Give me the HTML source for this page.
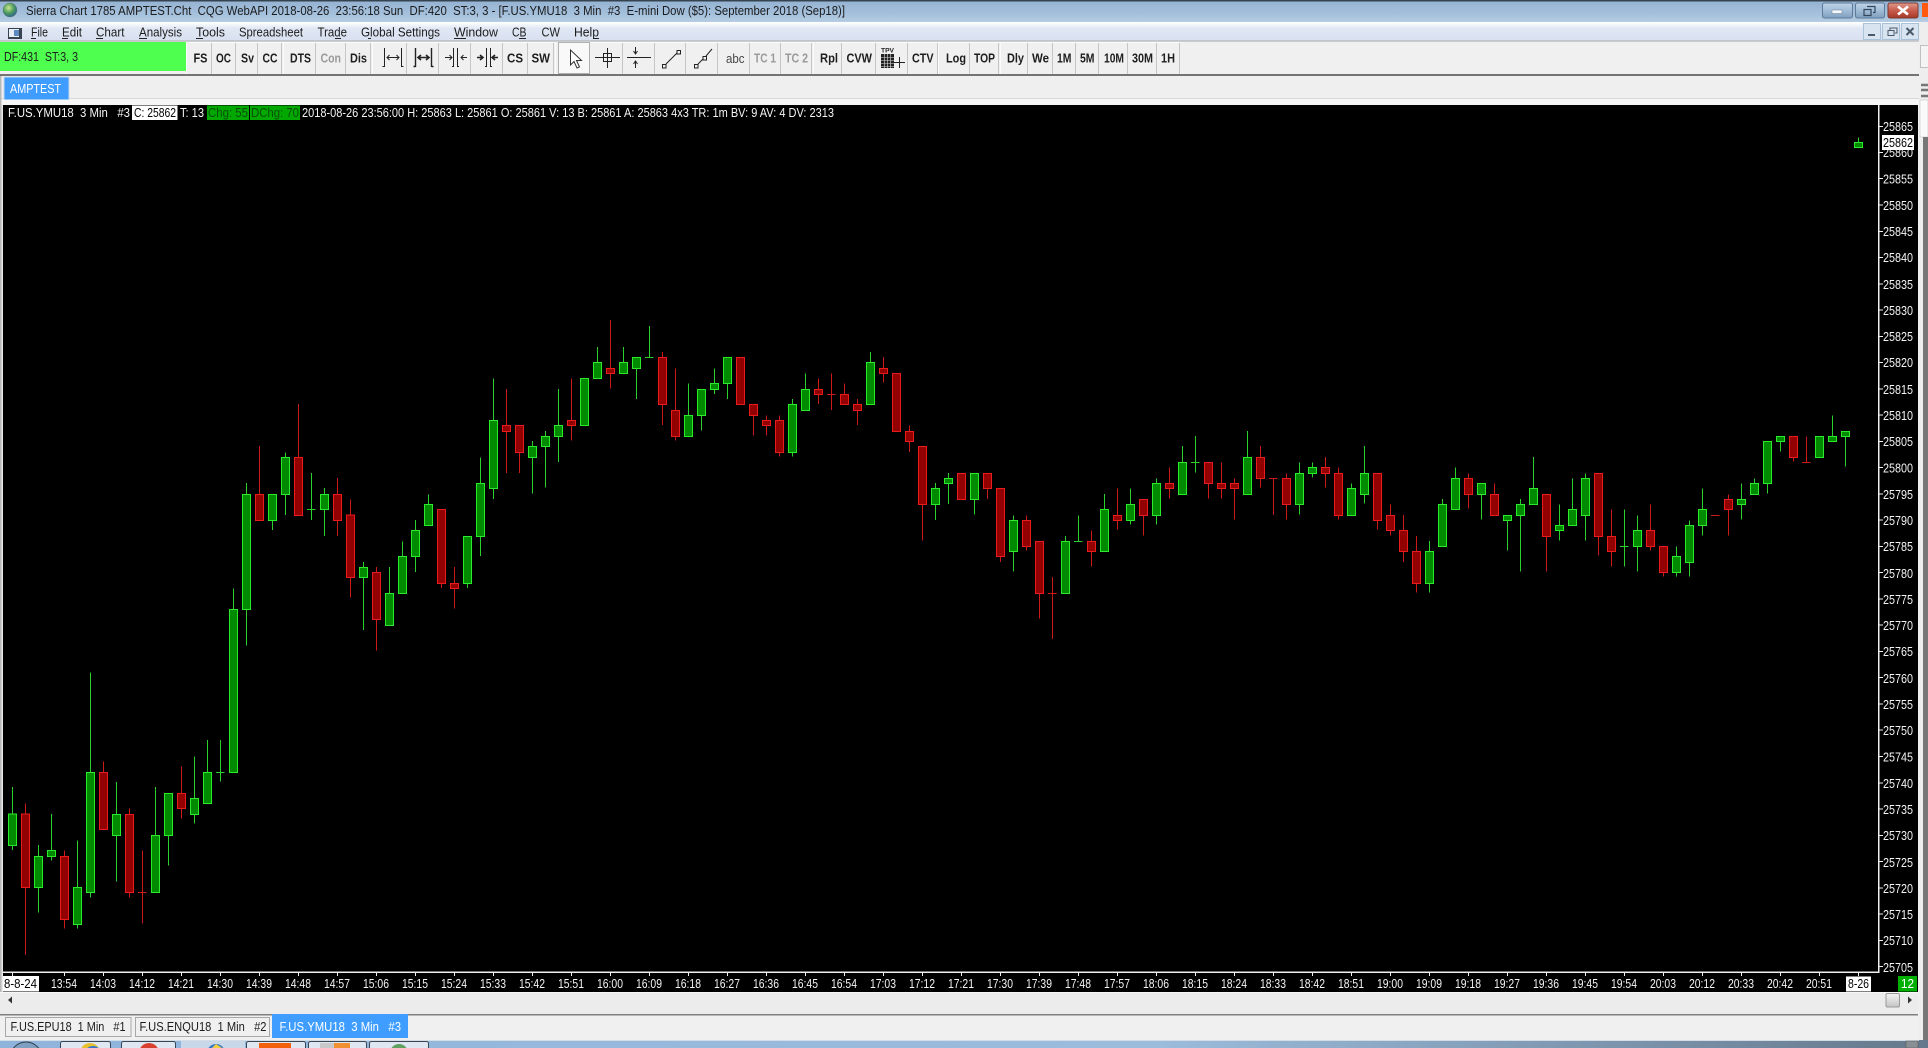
<!DOCTYPE html>
<html><head><meta charset="utf-8"><title>Sierra Chart</title>
<style>
html,body{margin:0;padding:0;background:#000;overflow:hidden}
svg{display:block}
text{font-family:"Liberation Sans",sans-serif;font-size:13px;white-space:pre}
.k{fill:#1c1c1c}
.w{fill:#f4f4f4}
.bt{font-weight:bold;fill:#1e1e1e}
.dis{font-weight:bold;fill:#9a9a9a}
.btn{fill:#f0f0f0}
.gw{stroke:#2bd02b;fill:none;stroke-width:3}
.gb{stroke:#2aea2a;fill:#008a00;stroke-width:3}
.rw{stroke:#cc1a1a;fill:none;stroke-width:3}
.rb{stroke:#e81c1c;fill:#920000;stroke-width:3}
</style></head>
<body>
<svg xmlns="http://www.w3.org/2000/svg" width="1928" height="1048" viewBox="0 0 1928 1048">
<defs>
<linearGradient id="tb" x1="0" y1="0" x2="0" y2="1"><stop offset="0" stop-color="#94b2d2"/><stop offset=".6" stop-color="#a3bfdb"/><stop offset="1" stop-color="#b6cde3"/></linearGradient>
<linearGradient id="mb" x1="0" y1="0" x2="0" y2="1"><stop offset="0" stop-color="#ffffff"/><stop offset=".35" stop-color="#e0e7f4"/><stop offset="1" stop-color="#d8e0f0"/></linearGradient>
<linearGradient id="wb" x1="0" y1="0" x2="0" y2="1"><stop offset="0" stop-color="#c0d4e8"/><stop offset=".5" stop-color="#a0bcd6"/><stop offset="1" stop-color="#7f9fbf"/></linearGradient>
<linearGradient id="cb" x1="0" y1="0" x2="0" y2="1"><stop offset="0" stop-color="#e09a8c"/><stop offset=".5" stop-color="#c85c4c"/><stop offset="1" stop-color="#a83828"/></linearGradient>
<linearGradient id="tk" x1="0" y1="0" x2="1" y2="0"><stop offset="0" stop-color="#8fb4dc"/><stop offset=".6" stop-color="#9cbcdc"/><stop offset="1" stop-color="#66798c"/></linearGradient>
<radialGradient id="gl" cx=".4" cy=".35" r=".7"><stop offset="0" stop-color="#c8e890"/><stop offset=".55" stop-color="#4c9a5c"/><stop offset="1" stop-color="#2a5f9a"/></radialGradient>
<linearGradient id="th" x1="0" y1="0" x2="0" y2="1"><stop offset="0" stop-color="#f4f4f4"/><stop offset="1" stop-color="#c4c4c4"/></linearGradient>
</defs>

<!-- base chrome -->
<rect width="1928" height="1048" fill="#f0f0f0"/>
<rect width="1928" height="22" fill="url(#tb)"/>
<rect width="1928" height="1.5" fill="#34434f"/>
<rect y="22" width="1920" height="19" fill="url(#mb)"/>
<rect y="40.500" width="1920" height="1" fill="#a8a8a8"/>
<rect x="0" y="41.500" width="1920" height="33" fill="#f0f0f0"/>
<rect x="0" y="74" width="1919" height="2" fill="#747474"/>
<rect x="0" y="76" width="1919" height="29" fill="#efefef"/>
<rect x="0" y="98" width="1919" height="1" fill="#d8d8d8"/>
<rect x="0" y="99" width="1919" height="6" fill="#f6f6f6"/>

<!-- title -->
<circle cx="10" cy="10" r="7" fill="url(#gl)" stroke="#5a7a6a" stroke-width=".5"/>
<text x="26" y="15" class="k" textLength="819" lengthAdjust="spacingAndGlyphs">Sierra Chart 1785 AMPTEST.Cht  CQG WebAPI 2018-08-26  23:56:18 Sun  DF:420  ST:3, 3 - [F.US.YMU18  3 Min  #3  E-mini Dow ($5): September 2018 (Sep18)]</text>
<!-- window buttons -->
<rect x="1822.5" y="3" width="30" height="15" rx="2" fill="url(#wb)" stroke="#5d7b99"/>
<rect x="1832" y="10" width="10" height="3.5" fill="#f4f6f8" stroke="#6a7f94" stroke-width=".5"/>
<rect x="1855.5" y="3" width="29" height="15" rx="2" fill="url(#wb)" stroke="#5d7b99"/>
<path d="M1867 6.5h8v6h-2M1864 9.5h7v6h-7z" fill="none" stroke="#33475c" stroke-width="1.2"/>
<rect x="1888" y="3" width="30" height="15" rx="2" fill="url(#cb)" stroke="#7a3a30"/>
<path d="M1898 6.5l10 8M1908 6.5l-10 8" stroke="#fff" stroke-width="2.6"/>
<rect x="1922" y="3" width="6" height="14" fill="#ff5a10"/>

<!-- menu -->
<rect x="8" y="28" width="14" height="11" fill="#39434f"/>
<rect x="9" y="29" width="10" height="8" fill="#e8eef6"/>
<rect x="14" y="30" width="5" height="6" fill="#5a8ac0"/>
<g class="k">
<text x="31" y="36.5" class="k" textLength="17" lengthAdjust="spacingAndGlyphs">File</text>
<text x="62" y="36.5" class="k" textLength="20" lengthAdjust="spacingAndGlyphs">Edit</text>
<text x="96" y="36.5" class="k" textLength="28.5" lengthAdjust="spacingAndGlyphs">Chart</text>
<text x="139" y="36.5" class="k" textLength="43" lengthAdjust="spacingAndGlyphs">Analysis</text>
<text x="196" y="36.5" class="k" textLength="29" lengthAdjust="spacingAndGlyphs">Tools</text>
<text x="239" y="36.5" class="k" textLength="64" lengthAdjust="spacingAndGlyphs">Spreadsheet</text>
<text x="317.5" y="36.5" class="k" textLength="29.5" lengthAdjust="spacingAndGlyphs">Trade</text>
<text x="361" y="36.5" class="k" textLength="79" lengthAdjust="spacingAndGlyphs">Global Settings</text>
<text x="454" y="36.5" class="k" textLength="44" lengthAdjust="spacingAndGlyphs">Window</text>
<text x="512" y="36.5" class="k" textLength="14.5" lengthAdjust="spacingAndGlyphs">CB</text>
<text x="541.5" y="36.5" class="k" textLength="18.5" lengthAdjust="spacingAndGlyphs">CW</text>
<text x="574" y="36.5" class="k" textLength="25" lengthAdjust="spacingAndGlyphs">Help</text>
</g>
<path d="M31 38.5h5M62 38.5h6M96 38.5h7M139 38.5h8M196 38.5h7M335 38.5h6M368 38.5h3M454 38.5h12M519 38.5h7M593 38.5h6" stroke="#222" stroke-width="1"/>
<!-- child window buttons -->
<g fill="#d8e4f0" stroke="#a9c1d9">
<rect x="1863.5" y="23.5" width="17" height="16"/>
<rect x="1882.5" y="23.5" width="17" height="16"/>
<rect x="1901.5" y="23.5" width="17" height="16"/>
</g>
<rect x="1868" y="34" width="7" height="2" fill="#4a5a6a"/>
<path d="M1890 30v-2h7v5h-2M1888 30.5h6v5h-6z" fill="none" stroke="#4a5a6a"/>
<path d="M1906.5 28l7 7M1913.5 28l-7 7" stroke="#4a5a6a" stroke-width="2"/>

<!-- right strip -->
<rect x="1919" y="22" width="9" height="1026" fill="#eeeeee"/>
<rect x="1920.5" y="45.5" width="8" height="22" fill="#f4f4f4" stroke="#c0c0c0"/>
<path d="M1921 85h7M1921 90h7M1921 96h7" stroke="#777" stroke-width="2.5"/>
<rect x="1920" y="100" width="8" height="37" fill="#fafafa" stroke="#bbb" stroke-width=".5"/>
<rect x="1923" y="137" width="5" height="911" fill="#777777"/>

<!-- toolbar -->
<rect x="0" y="42" width="186" height="29" fill="#4fff4f"/>
<text x="4" y="61" class="k" textLength="74" lengthAdjust="spacingAndGlyphs">DF:431  ST:3, 3</text>
<g class="btn">
<rect x="189" y="42" width="22" height="32"/><rect x="212" y="42" width="23" height="32"/><rect x="236" y="42" width="21.5" height="32"/><rect x="258" y="42" width="23.5" height="32"/>
<rect x="286" y="42" width="29.5" height="32"/><rect x="316" y="42" width="30" height="32"/><rect x="346.5" y="42" width="23.5" height="32"/>
<rect x="375" y="42" width="31.5" height="32"/><rect x="407" y="42" width="32" height="32"/><rect x="439.5" y="42" width="31" height="32"/><rect x="471" y="42" width="32" height="32"/><rect x="503.5" y="42" width="23.5" height="32"/><rect x="528" y="42" width="25.5" height="32"/>
<rect x="590.5" y="42" width="31.5" height="32"/><rect x="623" y="42" width="31" height="32"/><rect x="655" y="42" width="30" height="32"/><rect x="686" y="42" width="31.5" height="32"/><rect x="718" y="42" width="31" height="32"/><rect x="750" y="42" width="30" height="32"/><rect x="781" y="42" width="30.5" height="32"/>
<rect x="816" y="42" width="25" height="32"/><rect x="842" y="42" width="33.5" height="32"/><rect x="876" y="42" width="31" height="32"/><rect x="908" y="42" width="29" height="32"/>
<rect x="941" y="42" width="28.5" height="32"/><rect x="970" y="42" width="28.5" height="32"/>
<rect x="1003" y="42" width="24" height="32"/><rect x="1028" y="42" width="24" height="32"/><rect x="1053" y="42" width="22" height="32"/><rect x="1076" y="42" width="22" height="32"/><rect x="1099" y="42" width="28" height="32"/><rect x="1128" y="42" width="28" height="32"/><rect x="1157" y="42" width="22" height="32"/>
</g>
<path d="M211.500 43v31M235.500 43v31M257.500 43v31M281.500 43v31M315.500 43v31M345.500 43v31M370.500 43v31M406.500 43v31M438.500 43v31M470.500 43v31M502.500 43v31M527.500 43v31M553.500 43v31M622.500 43v31M654.500 43v31M685.500 43v31M717.500 43v31M749.500 43v31M780.500 43v31M811.500 43v31M841.500 43v31M875.500 43v31M907.500 43v31M937.500 43v31M969.500 43v31M998.500 43v31M1027.500 43v31M1052.500 43v31M1075.500 43v31M1098.500 43v31M1127.500 43v31M1156.500 43v31M1179.500 43v31" stroke="#c6c6c6" fill="none"/>
<path d="M186.500 42v32M283.500 42v32M372.500 42v32M555.500 42v32M813.500 42v32M938.500 42v32M1000.500 42v32M189 42.500H554M590 42.500H812M816 42.500H1180" stroke="#fbfbfb" fill="none"/>
<!-- pressed arrow button -->
<rect x="558.500" y="42.500" width="31" height="31" fill="#f9f9f9" stroke="#b0b0b0"/>

<text x="193.500" y="62.500" class="bt" textLength="14" lengthAdjust="spacingAndGlyphs">FS</text>
<text x="216" y="62.500" class="bt" textLength="15" lengthAdjust="spacingAndGlyphs">OC</text>
<text x="241" y="62.500" class="bt" textLength="13" lengthAdjust="spacingAndGlyphs">Sv</text>
<text x="262.500" y="62.500" class="bt" textLength="15" lengthAdjust="spacingAndGlyphs">CC</text>
<text x="290" y="62.500" class="bt" textLength="21" lengthAdjust="spacingAndGlyphs">DTS</text>
<text x="320.500" y="62.500" class="dis" textLength="20.500" lengthAdjust="spacingAndGlyphs">Con</text>
<text x="350" y="62.500" class="bt" textLength="17" lengthAdjust="spacingAndGlyphs">Dis</text>
<text x="507" y="62.500" class="bt" textLength="16" lengthAdjust="spacingAndGlyphs">CS</text>
<text x="531.500" y="62.500" class="bt" textLength="18.500" lengthAdjust="spacingAndGlyphs">SW</text>
<text x="726" y="63" style="fill:#444" textLength="18.500" lengthAdjust="spacingAndGlyphs">abc</text>
<text x="754" y="62.500" class="dis" textLength="22" lengthAdjust="spacingAndGlyphs">TC 1</text>
<text x="785" y="62.500" class="dis" textLength="23" lengthAdjust="spacingAndGlyphs">TC 2</text>
<text x="820" y="62.500" class="bt" textLength="18" lengthAdjust="spacingAndGlyphs">Rpl</text>
<text x="846.500" y="62.500" class="bt" textLength="25.500" lengthAdjust="spacingAndGlyphs">CVW</text>
<text x="912" y="62.500" class="bt" textLength="21.500" lengthAdjust="spacingAndGlyphs">CTV</text>
<text x="946" y="62.500" class="bt" textLength="20" lengthAdjust="spacingAndGlyphs">Log</text>
<text x="974" y="62.500" class="bt" textLength="21" lengthAdjust="spacingAndGlyphs">TOP</text>
<text x="1007" y="62.500" class="bt" textLength="17" lengthAdjust="spacingAndGlyphs">Dly</text>
<text x="1032" y="62.500" class="bt" textLength="17" lengthAdjust="spacingAndGlyphs">We</text>
<text x="1057" y="62.500" class="bt" textLength="14.500" lengthAdjust="spacingAndGlyphs">1M</text>
<text x="1080" y="62.500" class="bt" textLength="14.500" lengthAdjust="spacingAndGlyphs">5M</text>
<text x="1104" y="62.500" class="bt" textLength="20" lengthAdjust="spacingAndGlyphs">10M</text>
<text x="1132" y="62.500" class="bt" textLength="21" lengthAdjust="spacingAndGlyphs">30M</text>
<text x="1161" y="62.500" class="bt" textLength="14" lengthAdjust="spacingAndGlyphs">1H</text>

<!-- toolbar icons -->
<g fill="none" stroke="#222" stroke-width="1">
<path d="M384.500 48v19M401.500 48v19M382.500 66.500h2M401.500 66.500h2M387 57.500h12M389.500 55l-2.500 2.500 2.500 2.500M396.500 55l2.500 2.500-2.500 2.500" />
<path d="M415.500 48v19M431.500 48v19M413.500 66.500h2M431.500 66.500h2" stroke-width="1.400"/>
<path d="M418 57.500h11M421 55l-3 2.500 3 2.500M426 55l3 2.500-3 2.500" stroke-width="1.600"/>
<path d="M453.500 48v19M457.500 48v19M445 57.500h7M449.500 55l2.500 2.500-2.500 2.500M467 57.500h-6M463.500 55l-2.500 2.500 2.500 2.500M452 66.500h2M457 66.500h2"/>
<path d="M486.500 48v19M490.500 48v19M485 66.500h2M490 66.500h2"/>
<path d="M477 57.500h6M480 55l3 2.500-3 2.500M498 57.500h-6M495 55l-3 2.500 3 2.500" stroke-width="1.600"/>
<path d="M570.500 50v15l3.500-3.500 3 6.500 2.500-1-3-6.500h5z" stroke="#333" fill="#fff"/>
<path d="M595 57.500h25M607.500 48v20M603.500 53.500h8v8h-8z"/>
<path d="M627 57.500h24M635.500 47v7M635.500 68v-7M633.500 51l2 3 2-3M633.500 64l2-3 2 3" />
<path d="M666 64l11-11M662.500 64.500h3.500v3.500h-3.500zM677 50.500h3.500v3.500h-3.500z"/>
<path d="M698 64l5-5M706 56l6-7M694.500 64.500h3.500v3.500h-3.500zM703 56.500h3.500v3.500h-3.500z"/>
<path d="M894 62.500h11M899.500 57v11"/>
</g>
<text x="881" y="52.500" style="font-size:6px;font-weight:bold;fill:#222" textLength="13" lengthAdjust="spacingAndGlyphs">TPV</text>
<rect x="881" y="54" width="13" height="14" fill="#222"/>
<path d="M884.500 54v14M887.500 54v14M890.500 54v14M881 57.500h13M881 60.500h13M881 63.500h13M881 66.500h13" stroke="#ddd" stroke-width=".6"/>

<!-- chart tab -->
<rect x="4" y="77" width="65" height="22.500" fill="#3e9dff"/>
<path d="M4 99.500V77h65v22.500" fill="none" stroke="#c8d8e8"/>
<text x="10" y="93" class="w" textLength="51" lengthAdjust="spacingAndGlyphs" style="fill:#fff">AMPTEST</text>

<!-- chart -->
<rect x="3" y="105" width="1915" height="887" fill="#000"/>
<rect x="0" y="76" width="1.500" height="964" fill="#b8b8b8"/>
<rect x="1.500" y="105" width="1.500" height="887" fill="#e8e8e8"/>

<!-- info line -->
<text x="8" y="117" class="w" textLength="122" lengthAdjust="spacingAndGlyphs">F.US.YMU18  3 Min   #3</text>
<rect x="132" y="105.500" width="45.500" height="14.500" fill="#fff"/>
<text x="134" y="117" style="fill:#000" textLength="42" lengthAdjust="spacingAndGlyphs">C: 25862</text>
<text x="180" y="117" class="w" textLength="24" lengthAdjust="spacingAndGlyphs">T: 13</text>
<rect x="207" y="105.500" width="42" height="14.500" fill="#00a800"/>
<rect x="250" y="105.500" width="50" height="14.500" fill="#00a800"/>
<text x="208" y="117" style="fill:#0b4f0b" textLength="40" lengthAdjust="spacingAndGlyphs">Chg: 55</text>
<text x="251" y="117" style="fill:#0b4f0b" textLength="48" lengthAdjust="spacingAndGlyphs">DChg: 70</text>
<text x="302" y="117" class="w" textLength="532" lengthAdjust="spacingAndGlyphs">2018-08-26 23:56:00 H: 25863 L: 25861 O: 25861 V: 13 B: 25861 A: 25863 4x3 TR: 1m BV: 9 AV: 4 DV: 2313</text>

<!-- axes -->
<rect x="1878" y="105" width="1.500" height="867" fill="#f0f0f0"/>
<rect x="3" y="971.500" width="1876.500" height="1.500" fill="#f0f0f0"/>
<path d="M1879 126.500h4M1879 152.500h4M1879 178.500h4M1879 205h4M1879 231.500h4M1879 257.500h4M1879 284h4M1879 310h4M1879 336.500h4M1879 362.500h4M1879 389h4M1879 415h4M1879 441.500h4M1879 467.500h4M1879 494h4M1879 520h4M1879 546.500h4M1879 572.500h4M1879 599h4M1879 625h4M1879 651.500h4M1879 677.500h4M1879 704h4M1879 730h4M1879 756.500h4M1879 783h4M1879 809h4M1879 835.500h4M1879 861.500h4M1879 888h4M1879 914h4M1879 940.500h4M1879 966.500h4" stroke="#eee"/>
<g class="w">
<text x="1883" y="131" class="w" textLength="30" lengthAdjust="spacingAndGlyphs">25865</text>
<text x="1883" y="157" class="w" textLength="30" lengthAdjust="spacingAndGlyphs">25860</text>
<text x="1883" y="183.500" class="w" textLength="30" lengthAdjust="spacingAndGlyphs">25855</text>
<text x="1883" y="210" class="w" textLength="30" lengthAdjust="spacingAndGlyphs">25850</text>
<text x="1883" y="236" class="w" textLength="30" lengthAdjust="spacingAndGlyphs">25845</text>
<text x="1883" y="262" class="w" textLength="30" lengthAdjust="spacingAndGlyphs">25840</text>
<text x="1883" y="289" class="w" textLength="30" lengthAdjust="spacingAndGlyphs">25835</text>
<text x="1883" y="315" class="w" textLength="30" lengthAdjust="spacingAndGlyphs">25830</text>
<text x="1883" y="341" class="w" textLength="30" lengthAdjust="spacingAndGlyphs">25825</text>
<text x="1883" y="367" class="w" textLength="30" lengthAdjust="spacingAndGlyphs">25820</text>
<text x="1883" y="394" class="w" textLength="30" lengthAdjust="spacingAndGlyphs">25815</text>
<text x="1883" y="420" class="w" textLength="30" lengthAdjust="spacingAndGlyphs">25810</text>
<text x="1883" y="446" class="w" textLength="30" lengthAdjust="spacingAndGlyphs">25805</text>
<text x="1883" y="472.500" class="w" textLength="30" lengthAdjust="spacingAndGlyphs">25800</text>
<text x="1883" y="499" class="w" textLength="30" lengthAdjust="spacingAndGlyphs">25795</text>
<text x="1883" y="525" class="w" textLength="30" lengthAdjust="spacingAndGlyphs">25790</text>
<text x="1883" y="551" class="w" textLength="30" lengthAdjust="spacingAndGlyphs">25785</text>
<text x="1883" y="578" class="w" textLength="30" lengthAdjust="spacingAndGlyphs">25780</text>
<text x="1883" y="604" class="w" textLength="30" lengthAdjust="spacingAndGlyphs">25775</text>
<text x="1883" y="630" class="w" textLength="30" lengthAdjust="spacingAndGlyphs">25770</text>
<text x="1883" y="656" class="w" textLength="30" lengthAdjust="spacingAndGlyphs">25765</text>
<text x="1883" y="683" class="w" textLength="30" lengthAdjust="spacingAndGlyphs">25760</text>
<text x="1883" y="709" class="w" textLength="30" lengthAdjust="spacingAndGlyphs">25755</text>
<text x="1883" y="735" class="w" textLength="30" lengthAdjust="spacingAndGlyphs">25750</text>
<text x="1883" y="761.500" class="w" textLength="30" lengthAdjust="spacingAndGlyphs">25745</text>
<text x="1883" y="788" class="w" textLength="30" lengthAdjust="spacingAndGlyphs">25740</text>
<text x="1883" y="814" class="w" textLength="30" lengthAdjust="spacingAndGlyphs">25735</text>
<text x="1883" y="840" class="w" textLength="30" lengthAdjust="spacingAndGlyphs">25730</text>
<text x="1883" y="867" class="w" textLength="30" lengthAdjust="spacingAndGlyphs">25725</text>
<text x="1883" y="893" class="w" textLength="30" lengthAdjust="spacingAndGlyphs">25720</text>
<text x="1883" y="919" class="w" textLength="30" lengthAdjust="spacingAndGlyphs">25715</text>
<text x="1883" y="945" class="w" textLength="30" lengthAdjust="spacingAndGlyphs">25710</text>
<text x="1883" y="972" class="w" textLength="30" lengthAdjust="spacingAndGlyphs">25705</text>
</g>
<rect x="1882" y="135" width="32" height="15" fill="#fff"/>
<text x="1883" y="147" style="fill:#000" textLength="30" lengthAdjust="spacingAndGlyphs">25862</text>

<!-- x axis -->
<path d="M12.500 972v4M64.500 972v4M103.500 972v4M142.500 972v4M181.500 972v4M220.500 972v4M259.500 972v4M298.500 972v4M337.500 972v4M376.500 972v4M415.500 972v4M454.500 972v4M493.500 972v4M532.500 972v4M571.500 972v4M610.500 972v4M649.500 972v4M688.500 972v4M727.500 972v4M766.500 972v4M805.500 972v4M844.500 972v4M883.500 972v4M922.500 972v4M961.500 972v4M1000.500 972v4M1039.500 972v4M1078.500 972v4M1117.500 972v4M1156.500 972v4M1195.500 972v4M1234.500 972v4M1273.500 972v4M1312.500 972v4M1351.500 972v4M1390.500 972v4M1429.500 972v4M1468.500 972v4M1507.500 972v4M1546.500 972v4M1585.500 972v4M1624.500 972v4M1663.500 972v4M1702.500 972v4M1741.500 972v4M1780.500 972v4M1819.500 972v4M1858.500 972v4" stroke="#eee"/>
<rect x="3" y="976" width="36" height="15.500" fill="#fff"/>
<text x="4" y="988" style="fill:#000" textLength="33" lengthAdjust="spacingAndGlyphs">8-8-24</text>
<text x="51" y="988" class="w" textLength="26" lengthAdjust="spacingAndGlyphs">13:54</text>
<text x="90" y="988" class="w" textLength="26" lengthAdjust="spacingAndGlyphs">14:03</text>
<text x="129" y="988" class="w" textLength="26" lengthAdjust="spacingAndGlyphs">14:12</text>
<text x="168" y="988" class="w" textLength="26" lengthAdjust="spacingAndGlyphs">14:21</text>
<text x="207" y="988" class="w" textLength="26" lengthAdjust="spacingAndGlyphs">14:30</text>
<text x="246" y="988" class="w" textLength="26" lengthAdjust="spacingAndGlyphs">14:39</text>
<text x="285" y="988" class="w" textLength="26" lengthAdjust="spacingAndGlyphs">14:48</text>
<text x="324" y="988" class="w" textLength="26" lengthAdjust="spacingAndGlyphs">14:57</text>
<text x="363" y="988" class="w" textLength="26" lengthAdjust="spacingAndGlyphs">15:06</text>
<text x="402" y="988" class="w" textLength="26" lengthAdjust="spacingAndGlyphs">15:15</text>
<text x="441" y="988" class="w" textLength="26" lengthAdjust="spacingAndGlyphs">15:24</text>
<text x="480" y="988" class="w" textLength="26" lengthAdjust="spacingAndGlyphs">15:33</text>
<text x="519" y="988" class="w" textLength="26" lengthAdjust="spacingAndGlyphs">15:42</text>
<text x="558" y="988" class="w" textLength="26" lengthAdjust="spacingAndGlyphs">15:51</text>
<text x="597" y="988" class="w" textLength="26" lengthAdjust="spacingAndGlyphs">16:00</text>
<text x="636" y="988" class="w" textLength="26" lengthAdjust="spacingAndGlyphs">16:09</text>
<text x="675" y="988" class="w" textLength="26" lengthAdjust="spacingAndGlyphs">16:18</text>
<text x="714" y="988" class="w" textLength="26" lengthAdjust="spacingAndGlyphs">16:27</text>
<text x="753" y="988" class="w" textLength="26" lengthAdjust="spacingAndGlyphs">16:36</text>
<text x="792" y="988" class="w" textLength="26" lengthAdjust="spacingAndGlyphs">16:45</text>
<text x="831" y="988" class="w" textLength="26" lengthAdjust="spacingAndGlyphs">16:54</text>
<text x="870" y="988" class="w" textLength="26" lengthAdjust="spacingAndGlyphs">17:03</text>
<text x="909" y="988" class="w" textLength="26" lengthAdjust="spacingAndGlyphs">17:12</text>
<text x="948" y="988" class="w" textLength="26" lengthAdjust="spacingAndGlyphs">17:21</text>
<text x="987" y="988" class="w" textLength="26" lengthAdjust="spacingAndGlyphs">17:30</text>
<text x="1026" y="988" class="w" textLength="26" lengthAdjust="spacingAndGlyphs">17:39</text>
<text x="1065" y="988" class="w" textLength="26" lengthAdjust="spacingAndGlyphs">17:48</text>
<text x="1104" y="988" class="w" textLength="26" lengthAdjust="spacingAndGlyphs">17:57</text>
<text x="1143" y="988" class="w" textLength="26" lengthAdjust="spacingAndGlyphs">18:06</text>
<text x="1182" y="988" class="w" textLength="26" lengthAdjust="spacingAndGlyphs">18:15</text>
<text x="1221" y="988" class="w" textLength="26" lengthAdjust="spacingAndGlyphs">18:24</text>
<text x="1260" y="988" class="w" textLength="26" lengthAdjust="spacingAndGlyphs">18:33</text>
<text x="1299" y="988" class="w" textLength="26" lengthAdjust="spacingAndGlyphs">18:42</text>
<text x="1338" y="988" class="w" textLength="26" lengthAdjust="spacingAndGlyphs">18:51</text>
<text x="1377" y="988" class="w" textLength="26" lengthAdjust="spacingAndGlyphs">19:00</text>
<text x="1416" y="988" class="w" textLength="26" lengthAdjust="spacingAndGlyphs">19:09</text>
<text x="1455" y="988" class="w" textLength="26" lengthAdjust="spacingAndGlyphs">19:18</text>
<text x="1494" y="988" class="w" textLength="26" lengthAdjust="spacingAndGlyphs">19:27</text>
<text x="1533" y="988" class="w" textLength="26" lengthAdjust="spacingAndGlyphs">19:36</text>
<text x="1572" y="988" class="w" textLength="26" lengthAdjust="spacingAndGlyphs">19:45</text>
<text x="1611" y="988" class="w" textLength="26" lengthAdjust="spacingAndGlyphs">19:54</text>
<text x="1650" y="988" class="w" textLength="26" lengthAdjust="spacingAndGlyphs">20:03</text>
<text x="1689" y="988" class="w" textLength="26" lengthAdjust="spacingAndGlyphs">20:12</text>
<text x="1728" y="988" class="w" textLength="26" lengthAdjust="spacingAndGlyphs">20:33</text>
<text x="1767" y="988" class="w" textLength="26" lengthAdjust="spacingAndGlyphs">20:42</text>
<text x="1806" y="988" class="w" textLength="26" lengthAdjust="spacingAndGlyphs">20:51</text>
<rect x="1846" y="976.500" width="25" height="15" fill="#fff"/>
<text x="1848" y="988" style="fill:#000" textLength="21" lengthAdjust="spacingAndGlyphs">8-26</text>
<rect x="1898" y="976" width="19" height="15.500" fill="#00b000"/>
<text x="1901" y="988" style="fill:#fff" textLength="13" lengthAdjust="spacingAndGlyphs">12</text>

<!-- candles -->
<g shape-rendering="crispEdges">
<g transform="translate(0 660) scale(.33333)">
<path class="gw" d="M37 381V570M115 555V758M154 462V602M232 541V806M271 37V713M349 366V665M466 381V698M505 400V617M583 289V491M622 240V431M661 240V365M648 337H674"/>
<path class="rw" d="M76 430V885M193 571V806M310 304V509M388 445V713M427 571V791M414 698H440M544 319V476"/>
<path class="gb" d="M25 462H49V557H25ZM103 589H127V683H103ZM142 571H166V590H142ZM220 682H244V794H220ZM259 337H283V698H259ZM337 463H361V527H337ZM454 526H478V698H454ZM493 400H517V527H493ZM571 415H595V464H571ZM610 337H634V431H610Z"/>
<path class="rb" d="M64 462H88V683H64ZM181 589H205V779H181ZM298 337H322V509H298ZM376 463H400V698H376ZM532 400H556V446H532Z"/>
</g>
<g transform="translate(220 300) scale(.33333)">
<path class="gw" d="M40 865V1418M79 549V1037M157 583V690M196 457V645M274 519V660M261 628H287M313 564V708M430 786V990M508 801V977M547 724V881M586 660V816M625 583V677M742 709V864M781 472V768M820 235V597M937 423V581M976 393V563M1015 267V486M1093 235V377M1132 141V236"/>
<path class="rw" d="M118 438V662M235 312V647M352 534V708M391 598V893M469 801V1052M664 628V864M703 801V926M859 267V519M898 376V519M1054 235V422M1171 60V266"/>
<path class="gb" d="M28 928H52V1418H28ZM67 583H91V929H67ZM145 583H169V662H145ZM184 472H208V584H184ZM301 583H325V629H301ZM418 802H442V833H418ZM496 880H520V977H496ZM535 769H559V881H535ZM574 691H598V770H574ZM613 613H637V677H613ZM730 709H754V851H730ZM769 550H793V710H769ZM808 361H832V566H808ZM925 439H949V473H925ZM964 409H988V440H964ZM1003 376H1027V410H1003ZM1081 235H1105V377H1081ZM1120 187H1144V236H1120Z"/>
<path class="rb" d="M106 583H130V662H106ZM223 472H247V647H223ZM340 583H364V662H340ZM379 645H403V833H379ZM457 817H481V959H457ZM652 628H676V851H652ZM691 850H715V866H691ZM847 376H871V395H847ZM886 376H910V458H886ZM1042 361H1066V377H1042ZM1159 205H1183V221H1159Z"/>
</g>
<g transform="translate(600 300) scale(.33333)">
<path class="gw" d="M70 141V221M109 172V297M148 78V172M135 172H161M265 250V410M304 268V392M343 205V282M382 172V297M577 297V470M616 220V332M811 156V314M1006 549V660M1045 519V612M1123 520V644"/>
<path class="rw" d="M187 156V375M226 205V422M460 313V407M499 346V407M538 346V470M655 235V312M694 220V330M681 284H707M733 250V314M772 297V375M850 171V248M928 376V456M967 439V722M1162 520V597"/>
<path class="gb" d="M58 187H82V221H58ZM97 172H121V206H97ZM253 346H277V410H253ZM292 268H316V347H292ZM331 250H355V269H331ZM370 172H394V251H370ZM565 313H589V458H565ZM604 268H628V332H604ZM799 187H823V314H799ZM994 565H1018V614H994ZM1033 535H1057V551H1033ZM1111 520H1135V599H1111Z"/>
<path class="rb" d="M175 172H199V314H175ZM214 331H238V410H214ZM409 172H433V314H409ZM448 313H472V347H448ZM487 361H511V377H487ZM526 361H550V458H526ZM643 268H667V284H643ZM721 283H745V314H721ZM760 313H784V332H760ZM838 205H862V221H838ZM877 220H901V395H877ZM916 394H940V425H916ZM955 439H979V614H955ZM1072 520H1096V599H1072ZM1150 520H1174V566H1150Z"/>
</g>
<g transform="translate(1000 400) scale(.33333)">
<path class="gw" d="M40 346V515M196 408V581M235 346V424M222 424H248M313 282V455M391 265V374M469 235V374M547 138V284M586 108V218M573 187H599M742 93V284M898 187V344M937 187V233M1054 250V347M1093 138V311"/>
<path class="rw" d="M1 265V486M79 346V452M118 424V656M157 531V717M144 580H170M274 391V500M352 265V389M430 298V407M508 202V296M625 187V296M664 187V296M703 235V359M781 138V263M820 235V345M807 235H833M859 220V359M976 171V263M1015 202V359M1132 220V389M1171 313V407"/>
<path class="gb" d="M28 361H52V455H28ZM184 424H208V581H184ZM301 328H325V455H301ZM379 313H403V362H379ZM457 250H481V347H457ZM535 187H559V284H535ZM730 172H754V284H730ZM886 220H910V314H886ZM925 202H949V221H925ZM1042 265H1066V347H1042ZM1081 220H1105V284H1081Z"/>
<path class="rb" d="M-10 265H14V470H-10ZM67 361H91V440H67ZM106 424H130V581H106ZM262 424H286V455H262ZM340 346H364V362H340ZM418 298H442V347H418ZM496 250H520V266H496ZM613 187H637V251H613ZM652 250H676V266H652ZM691 250H715V266H691ZM769 172H793V236H769ZM847 235H871V314H847ZM964 202H988V221H964ZM1003 220H1027V347H1003ZM1120 220H1144V362H1120ZM1159 346H1183V392H1159Z"/>
</g>
<g transform="translate(1400 400) scale(.33333)">
<path class="gw" d="M88 423V578M127 297V440M166 202V329M244 250V359M322 346V452M361 297V515M400 171V314M478 313V422M517 235V377M556 220V422M673 328V500M660 439H686M712 346V515M829 439V530M868 361V530M907 265V407M1024 250V359M1063 235V284M1102 124V281M1141 109V155M1297 46V125M1336 94V200"/>
<path class="rw" d="M10 345V486M49 408V578M205 220V326M283 250V347M439 283V515M595 220V467M634 328V500M751 313V452M790 439V530M933 346H959M985 283V407M1180 109V185M1219 109V187M1206 187H1232"/>
<path class="gb" d="M76 454H100V551H76ZM115 313H139V440H115ZM154 235H178V329H154ZM232 250H256V284H232ZM310 346H334V362H310ZM349 313H373V347H349ZM388 265H412V314H388ZM466 376H490V392H466ZM505 328H529V377H505ZM544 235H568V347H544ZM700 391H724V440H700ZM817 469H841V518H817ZM856 376H880V488H856ZM895 328H919V377H895ZM1012 298H1036V314H1012ZM1051 250H1075V284H1051ZM1090 124H1114V251H1090ZM1129 109H1153V125H1129ZM1246 109H1270V173H1246ZM1285 109H1309V125H1285ZM1324 94H1348V110H1324Z"/>
<path class="rb" d="M-2 391H22V455H-2ZM37 454H61V551H37ZM193 235H217V284H193ZM271 283H295V347H271ZM427 283H451V410H427ZM583 220H607V410H583ZM622 409H646V455H622ZM739 391H763V440H739ZM778 439H802V518H778ZM973 298H997V329H973ZM1168 109H1192V173H1168Z"/>
</g>
<g transform="translate(1720 0) scale(.33333)">
<path class="gw" d="M415 412V428"/>
<path class="gb" d="M403 427H427V443H403Z"/>
</g>
</g>

<!-- scrollbar -->
<rect x="0" y="992" width="1918" height="22" fill="#ececec"/>
<rect x="0" y="992" width="1918" height="1" fill="#f8f8f8"/>
<path d="M12 996.500v7l-4-3.500z" fill="#333"/>
<path d="M1908 996.500v7l4-3.500z" fill="#333"/>
<rect x="1886" y="993.500" width="13.500" height="13.500" rx="1.500" fill="url(#th)" stroke="#9a9a9a"/>
<rect x="0" y="1014" width="1918" height="1.500" fill="#808080"/>
<rect x="0" y="1015.500" width="1918" height="25" fill="#f0f0f0"/>

<!-- bottom tabs -->
<rect x="5.500" y="1017.500" width="125.500" height="19" fill="#f0f0f0" stroke="#a8a8a8"/>
<rect x="135.500" y="1017.500" width="134" height="19" fill="#f0f0f0" stroke="#a8a8a8"/>
<rect x="272" y="1014" width="136" height="24" fill="#3e9dff"/>
<text x="10.500" y="1031" class="k" textLength="115" lengthAdjust="spacingAndGlyphs">F.US.EPU18  1 Min   #1</text>
<text x="139.500" y="1031" class="k" textLength="127" lengthAdjust="spacingAndGlyphs">F.US.ENQU18  1 Min   #2</text>
<text x="279.500" y="1031" style="fill:#fff" textLength="121.500" lengthAdjust="spacingAndGlyphs">F.US.YMU18  3 Min   #3</text>

<!-- taskbar -->
<rect x="0" y="1040" width="1928" height="8" fill="url(#tk)"/>
<rect x="0" y="1040" width="1919" height="1" fill="#d4dce6"/>
<circle cx="26" cy="1058" r="16" fill="#7fa0c0" stroke="#2c3a48"/>
<g fill="#dfe8f2" stroke="#3a4652">
<rect x="60.500" y="1041.500" width="50" height="14" rx="2"/>
<rect x="121.500" y="1041.500" width="54" height="14" rx="2"/>
<rect x="246.500" y="1041.500" width="59" height="14" rx="2"/>
<rect x="308.500" y="1041.500" width="58" height="14" rx="2"/>
<rect x="369.500" y="1041.500" width="59" height="14" rx="2"/>
</g>
<rect x="181" y="1041" width="64" height="7" fill="#c8d8e8"/>
<circle cx="90" cy="1053" r="10" fill="#e8c030"/>
<circle cx="93" cy="1055" r="9" fill="#3a78c8"/>
<circle cx="149" cy="1053" r="10" fill="#d84030"/>
<circle cx="216" cy="1053" r="9" fill="#3a78c8"/>
<path d="M216 1044l6 4h-10z" fill="#f0d040"/>
<rect x="259" y="1043" width="32" height="5" fill="#f2600c"/>
<rect x="320" y="1043" width="14" height="5" fill="#c8c8c8"/>
<rect x="334" y="1043" width="16" height="5" fill="#f09030"/>
<circle cx="399" cy="1053" r="9" fill="#60a060"/>
<rect x="1906" y="1041" width="12" height="7" fill="#8a8f95" stroke="#555" stroke-width=".5"/>
</svg>
</body></html>
